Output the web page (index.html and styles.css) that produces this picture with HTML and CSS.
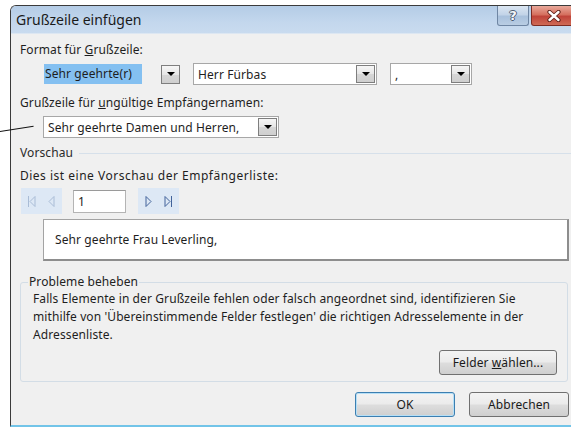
FILE: index.html
```html
<!DOCTYPE html>
<html lang="de">
<head>
<meta charset="utf-8">
<title>Grußzeile einfügen</title>
<link rel="stylesheet" href="styles.css">
</head>
<body>
<div class="pointer-line"></div>
<div class="window">
  <div class="titlebar">
    <span class="title">Grußzeile einfügen</span>
    <div class="caption-buttons">
      <span class="cap-btn help">?</span>
      <span class="cap-btn close">
        <svg width="14" height="12" viewBox="0 0 14 12">
          <path d="M2.5 2 L11.5 10 M11.5 2 L2.5 10" stroke="#5a1d16" stroke-width="4.2" stroke-linecap="round"/>
          <path d="M2.5 2 L11.5 10 M11.5 2 L2.5 10" stroke="#ffffff" stroke-width="2.4" stroke-linecap="round"/>
        </svg>
      </span>
    </div>
  </div>
  <div class="client">
    <div class="label label-first">Format für <u>G</u>rußzeile:</div>
    <div class="combo-row">
      <div class="combo combo-salutation">
        <span class="selected">Sehr geehrte(r)</span>
        <span class="drop-btn"><i class="arrow"></i></span>
      </div>
      <div class="combo field combo-name">
        <span class="value">Herr Fürbas</span>
        <span class="drop-btn"><i class="arrow"></i></span>
      </div>
      <div class="combo field combo-punct">
        <span class="value">,</span>
        <span class="drop-btn"><i class="arrow"></i></span>
      </div>
    </div>
    <div class="label label-invalid">Grußzeile für <u>u</u>ngültige Empfängernamen:</div>
    <div class="combo field combo-invalid">
      <span class="value">Sehr geehrte Damen und Herren,</span>
      <span class="drop-btn"><i class="arrow"></i></span>
    </div>
    <div class="section-head"><span>Vorschau</span></div>
    <div class="label label-preview">Dies ist eine Vorschau der Empfängerliste:</div>
    <div class="nav-row">
      <div class="nav-group">
        <span class="nav-btn">
          <svg width="9" height="13" viewBox="0 0 9 13"><path d="M1.5 1 V12 M8 1.5 L3 6.5 L8 11.5 Z" fill="none" stroke="#a9bcd6" stroke-width="1"/></svg>
        </span>
        <span class="nav-btn">
          <svg width="9" height="13" viewBox="0 0 9 13"><path d="M7 1.5 L2 6.5 L7 11.5 Z" fill="none" stroke="#a9bcd6" stroke-width="1"/></svg>
        </span>
      </div>
      <div class="record-box">1</div>
      <div class="nav-group">
        <span class="nav-btn">
          <svg width="9" height="13" viewBox="0 0 9 13"><path d="M2 1.5 L7 6.5 L2 11.5 Z" fill="none" stroke="#42639a" stroke-width="1"/></svg>
        </span>
        <span class="nav-btn">
          <svg width="9" height="13" viewBox="0 0 9 13"><path d="M1 1.5 L6 6.5 L1 11.5 Z M7.5 1 V12" fill="none" stroke="#42639a" stroke-width="1"/></svg>
        </span>
      </div>
    </div>
    <div class="preview">Sehr geehrte Frau Leverling,</div>
    <fieldset class="troubleshoot">
      <legend>Probleme beheben</legend>
      <p>Falls Elemente in der Grußzeile fehlen oder falsch angeordnet sind, identifizieren Sie<br>mithilfe von 'Übereinstimmende Felder festlegen' die richtigen Adresselemente in der<br>Adressenliste.</p>
      <div class="group-actions"><span class="btn btn-fields">Felder <u>w</u>ählen...</span></div>
    </fieldset>
    <div class="dialog-actions">
      <span class="btn btn-default">OK</span>
      <span class="btn">Abbrechen</span>
    </div>
  </div>
</div>
</body>
</html>
```

FILE: styles.css
```css
* { box-sizing: border-box; }

html, body {
  margin: 0;
  padding: 0;
  overflow: hidden;
}

body {
  width: 571px;
  height: 427px;
  position: relative;
  background: #ffffff;
  font-family: "Noto Sans", "Segoe UI", sans-serif;
  font-size: 12px;
  letter-spacing: 0.1px;
  color: #1e1e1e;
}

/* leader line drawn over the page edge */
.pointer-line {
  position: absolute;
  left: 0;
  top: 131px;
  width: 34px;
  height: 1.4px;
  background: #111;
  transform-origin: left center;
  transform: rotate(-9deg);
  z-index: 2;
}

/* dialog frame */
.window {
  margin: 5px 0 0 10px;
  width: 575px;
  height: 422px;
  border-left: 1px solid #3b3b3b;
  border-top: 1px solid #3b3b3b;
  border-bottom: 2px solid #72c4e8;
  border-radius: 6px 0 0 0;
  background: #f0f0f0;
  display: flex;
  flex-direction: column;
  overflow: hidden;
}

.titlebar {
  height: 28px;
  flex: none;
  display: flex;
  align-items: flex-start;
  background: linear-gradient(#b4cce6, #c3d7ed 60%, #c9dbef);
  border-bottom: 1px solid #dde7f2;
  padding-left: 5px;
}

.title {
  font-size: 14px;
  letter-spacing: 0;
  line-height: 18px;
  padding-top: 5px;
  color: #1a1a1a;
}

.caption-buttons {
  margin-left: auto;
  margin-right: 8px;
  display: flex;
  gap: 2px;
}

.cap-btn {
  height: 20px;
  border-radius: 0 0 3px 3px;
  display: flex;
  align-items: center;
  justify-content: center;
}

.cap-btn.help {
  width: 32px;
  border: 1px solid #6f86a3;
  border-top: none;
  background: linear-gradient(#dbe6f2, #c3d4e8 45%, #a9c1dc 55%, #b9cde3);
  font: bold 13px "DejaVu Sans", sans-serif;
  color: #f4f6f9;
  text-shadow: 1px 0 #4e5d72, -1px 0 #4e5d72, 0 1px #4e5d72, 0 -1px #4e5d72;
}

.cap-btn.close {
  width: 46px;
  border: 1px solid #7d2c23;
  border-top: none;
  background: linear-gradient(#e9a99b, #d5705f 45%, #c0443a 55%, #cf6a55);
}

/* client area */
.client {
  flex: 1;
  display: flex;
  flex-direction: column;
  padding-left: 9px;
}

.label {
  line-height: 16px;
  white-space: nowrap;
}

.label-first { margin-top: 8px; }
.label-invalid { margin-top: 10px; }
.label-preview { margin-top: 7px; letter-spacing: 0.5px; }

.combo-row {
  display: flex;
  align-items: center;
  margin-top: 5px;
  margin-left: 24px;
  height: 22px;
}

.combo {
  display: flex;
  align-items: center;
  height: 22px;
}

.combo.field {
  background: #fff;
  border: 1px solid #a7a7a7;
  padding: 1px;
}

.combo .value {
  flex: 1;
  padding-left: 3px;
  white-space: nowrap;
}

.combo-salutation {
  width: 136px;
}

.combo-salutation .selected {
  background: #84c0f1;
  height: 20px;
  line-height: 20px;
  width: 98px;
  padding-left: 1px;
  white-space: nowrap;
}

.combo-salutation .drop-btn {
  margin-left: auto;
}

.combo-name {
  width: 184px;
  margin-left: 13px;
}

.combo-punct {
  width: 82px;
  margin-left: 13px;
}

.combo-invalid {
  margin-top: 5px;
  margin-left: 23px;
  width: 236px;
}

.drop-btn {
  width: 19px;
  height: 18px;
  border: 1px solid #7e7e7e;
  background: linear-gradient(#f6f6f6, #e6e6e6 50%, #d6d6d6 51%, #cfcfcf);
  display: flex;
  align-items: center;
  justify-content: center;
  flex: none;
}

.combo-salutation .drop-btn { height: 19px; }

.arrow {
  width: 0;
  height: 0;
  border-left: 4px solid transparent;
  border-right: 4px solid transparent;
  border-top: 4px solid #000;
}

/* preview section */
.section-head {
  margin-top: 7px;
  display: flex;
  align-items: center;
  line-height: 16px;
  color: #2a2a2a;
}

.section-head::after {
  content: "";
  flex: 1;
  height: 1px;
  margin-left: 6px;
  background: #d6e0ea;
}

.nav-row {
  display: flex;
  align-items: center;
  margin-top: 4px;
  margin-left: 1px;
  height: 26px;
}

.nav-group {
  display: flex;
  height: 26px;
  width: 41px;
  background: #dde8f5;
}

.nav-btn {
  flex: 1;
  display: flex;
  align-items: center;
  justify-content: center;
}

.record-box {
  width: 53px;
  height: 23px;
  margin: 0 12px 0 11px;
  background: #fff;
  border: 1px solid #b4b4b4;
  border-top-color: #9a9a9a;
  line-height: 21px;
  padding-left: 4px;
}

.preview {
  margin-top: 5px;
  margin-left: 23px;
  width: 526px;
  height: 42px;
  background: #fff;
  border: 1px solid #a3a3a3;
  border-right: 2px solid #8d8d8d;
  border-bottom: 2px solid #8d8d8d;
  padding-left: 11px;
  line-height: 39px;
}

/* troubleshooting group */
.troubleshoot {
  margin: 13px 0 0 0;
  width: 548px;
  min-width: 0;
  border: 1px solid #d3dde6;
  border-radius: 3px;
  padding: 0 10px 6px 12px;
}

.troubleshoot legend {
  padding: 0 1px;
  margin-left: -5px;
  line-height: 16px;
  color: #222;
}

.troubleshoot p {
  margin: 0;
  line-height: 18px;
  white-space: nowrap;
}

.group-actions {
  display: flex;
  justify-content: flex-end;
  margin-top: 6px;
}

.btn {
  display: flex;
  align-items: center;
  justify-content: center;
  height: 25px;
  width: 100px;
  border: 1px solid #707070;
  border-radius: 3px;
  background: linear-gradient(#f3f3f3, #ebebeb 48%, #dddddd 52%, #cfcfcf);
  color: #1a1a1a;
  white-space: pre;
}

.btn-fields { width: 118px; }

.btn-default {
  border-color: #3c7fb1;
  box-shadow: inset 0 0 0 1px #b6dff6;
}

.dialog-actions {
  display: flex;
  justify-content: flex-end;
  gap: 14px;
  margin-top: 10px;
  padding-right: 16px;
}
```
